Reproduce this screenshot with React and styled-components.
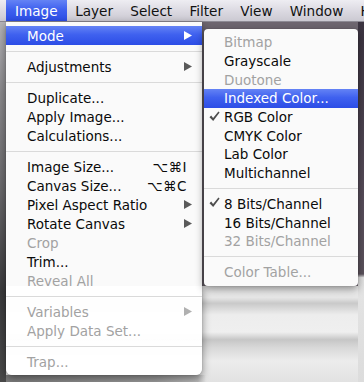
import React from "react";
import styled, { createGlobalStyle } from "styled-components";

const GlobalStyle = createGlobalStyle`
  html, body { margin: 0; padding: 0; background: #d8d8d8; }
  body { font-family: "DejaVu Sans", "Liberation Sans", sans-serif; overflow: hidden; }
`;

const BLUE = "linear-gradient(#6483f5 0%, #3f61ef 45%, #2c4de6 100%)";

const Screen = styled.div`
  position: relative;
  width: 364px;
  height: 382px;
  overflow: hidden;
  display: flex;
  flex-direction: column;
  font-size: 13.5px;
`;

const MenuBar = styled.div`
  height: 21px;
  flex: none;
  display: flex;
  align-items: stretch;
  padding-left: 6px;
  background: linear-gradient(#eeedf2 0%, #dcdae2 50%, #cbc9d2 100%);
  border-bottom: 1px solid #8d8a94;
  white-space: nowrap;
  overflow: hidden;
`;

const BarItem = styled.div`
  flex: none;
  padding: 0 ${(p) => (p.$active ? "9px" : "8.6px")};
  display: flex;
  align-items: center;
  font-size: 13.6px;
  color: ${(p) => (p.$active ? "#fff" : "#111")};
  background: ${(p) => (p.$active ? BLUE : "transparent")};
`;

const Backdrop = styled.div`
  flex: 1;
  display: flex;
`;

const LeftStrip = styled.div`
  width: 6px;
  background: linear-gradient(#b5b4b8 0%, #8a898c 20%, #6c6b6e 45%, #3b3b3d 75%, #4a4a4a 100%);
`;

const Middle = styled.div`
  flex: 1;
  display: flex;
  flex-direction: column;
  background: #e6e5e8;
`;

const MiddleTop = styled.div`
  flex: 1;
  background: #6e6670;
`;

const MiddleBottom = styled.div`
  height: 96px;
  background:
    linear-gradient(to right, #7c7c7c 0, #9b9b9b 150px, #b9b9b9 192px, rgba(0, 0, 0, 0) 200px) bottom / 100% 7px no-repeat,
    linear-gradient(#f2f2f2 0%, #e7e7e7 12%, #c9c9c9 18%, #ededed 30%, #efefef 48%, #c6c6c6 56%, #d8d8d8 64%, #ececec 78%, #e2e2e2 100%);
`;

const RightStrip = styled.div`
  width: 6px;
  background: linear-gradient(#3b3340 0%, #574d5a 50%, #5b525c 70%, #e4e4e4 71%, #dcdcdc 100%);
`;

const Menu = styled.div`
  position: absolute;
  top: ${(p) => p.$top}px;
  left: ${(p) => p.$left}px;
  width: ${(p) => p.$width}px;
  padding: ${(p) => p.$pad};
  background: rgba(255, 255, 255, 0.97);
  border-radius: ${(p) => p.$radius};
  box-shadow: 0 3px 9px rgba(0, 0, 0, 0.45), 0 0 1px rgba(0, 0, 0, 0.35);
`;

const Row = styled.div`
  position: relative;
  display: flex;
  align-items: center;
  height: ${(p) => p.$h}px;
  padding-left: ${(p) => p.$indent}px;
  padding-right: 10px;
  white-space: nowrap;
  color: ${(p) => (p.$selected ? "#fff" : p.$disabled ? "#a2a2a2" : "#0a0a0a")};
  background: ${(p) => (p.$selected ? BLUE : "transparent")};
`;

const Label = styled.span`
  flex: 1;
`;

const Shortcut = styled.span`
  margin-right: 5px;
  letter-spacing: 0.5px;
`;

const Separator = styled.div`
  height: 12px;
  display: flex;
  align-items: center;
  &::after {
    content: "";
    flex: 1;
    height: 1px;
    background: #dadada;
  }
`;

const CheckCell = styled.span`
  width: 15px;
  flex: none;
  display: flex;
  align-items: center;
  padding-bottom: 2px;
  color: #555;
`;

const Arrow = ({ color }) => (
  <svg width="8" height="9" viewBox="0 0 8 9">
    <polygon points="0,0 8,4.5 0,9" fill={color} />
  </svg>
);

const Check = () => (
  <svg width="11" height="11" viewBox="0 0 11 11">
    <path d="M0.5 6.2 L2.2 4.6 L4.1 7 L9.4 0.6 L10.6 1.6 L4.2 10 Z" fill="#4d4d4d" />
  </svg>
);

const mainItems = [
  { label: "Mode", arrow: true, selected: true },
  "sep",
  { label: "Adjustments", arrow: true },
  "sep",
  { label: "Duplicate..." },
  { label: "Apply Image..." },
  { label: "Calculations..." },
  "sep",
  { label: "Image Size...", shortcut: "⌥⌘I" },
  { label: "Canvas Size...", shortcut: "⌥⌘C" },
  { label: "Pixel Aspect Ratio", arrow: true },
  { label: "Rotate Canvas", arrow: true },
  { label: "Crop", disabled: true },
  { label: "Trim..." },
  { label: "Reveal All", disabled: true },
  "sep",
  { label: "Variables", arrow: true, disabled: true },
  { label: "Apply Data Set...", disabled: true },
  "sep",
  { label: "Trap...", disabled: true },
];

const subItems = [
  { label: "Bitmap", disabled: true },
  { label: "Grayscale" },
  { label: "Duotone", disabled: true },
  { label: "Indexed Color...", selected: true },
  { label: "RGB Color", checked: true },
  { label: "CMYK Color" },
  { label: "Lab Color" },
  { label: "Multichannel" },
  "sep",
  { label: "8 Bits/Channel", checked: true },
  { label: "16 Bits/Channel" },
  { label: "32 Bits/Channel", disabled: true },
  "sep",
  { label: "Color Table...", disabled: true },
];

const barItems = ["Image", "Layer", "Select", "Filter", "View", "Window", "Help"];

export default function App() {
  return (
    <Screen>
      <GlobalStyle />
      <MenuBar>
        {barItems.map((t, i) => (
          <BarItem key={t} $active={i === 0}>
            {t}
          </BarItem>
        ))}
      </MenuBar>
      <Backdrop>
        <LeftStrip />
        <Middle>
          <MiddleTop />
          <MiddleBottom />
        </Middle>
        <RightStrip />
      </Backdrop>

      <Menu $top={22} $left={6} $width={196} $pad="4px 0" $radius="0 0 6px 6px">
        {mainItems.map((it, i) =>
          it === "sep" ? (
            <Separator key={i} />
          ) : (
            <Row key={i} $h={19} $indent={21} $selected={it.selected} $disabled={it.disabled}>
              <Label>{it.label}</Label>
              {it.shortcut && <Shortcut>{it.shortcut}</Shortcut>}
              {it.arrow && (
                <Arrow color={it.selected ? "#fff" : it.disabled ? "#b0b0b0" : "#5a5a5a"} />
              )}
            </Row>
          )
        )}
      </Menu>

      <Menu $top={29} $left={204} $width={154} $pad="4px 0 5px" $radius="4px">
        {subItems.map((it, i) =>
          it === "sep" ? (
            <Separator key={i} />
          ) : (
            <Row key={i} $h={18.7} $indent={5} $selected={it.selected} $disabled={it.disabled}>
              <CheckCell>{it.checked && <Check />}</CheckCell>
              <Label>{it.label}</Label>
            </Row>
          )
        )}
      </Menu>
    </Screen>
  );
}
